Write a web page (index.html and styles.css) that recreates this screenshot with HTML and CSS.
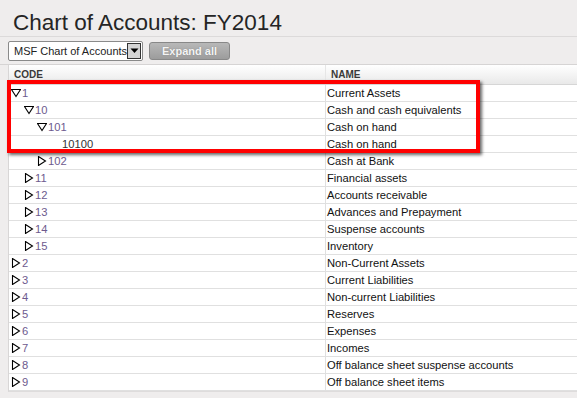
FILE: index.html
```html
<!DOCTYPE html>
<html>
<head>
<meta charset="utf-8">
<link rel="stylesheet" href="styles.css">
</head>
<body>
<div class="page">
  <h1 class="title">Chart of Accounts: FY2014</h1>
  <div class="toolbar">
    <div class="select"><span class="select-text">MSF Chart of Accounts</span><span class="select-arrow"><svg width="11" height="11" viewBox="0 0 11 11"><path d="M1.5 3.5 H9.5 L5.5 8 Z" fill="#000"/></svg></span></div>
    <button class="btn">Expand all</button>
  </div>
  <div class="grid">
    <div class="head"><div class="hc code">CODE</div><div class="hc name">NAME</div></div>
    <div class="row"><div class="c code l0"><svg class="tri" viewBox="0 0 10 10"><path d="M0.5 1.5 H9.5 L5 8.5 Z"/></svg><span class="lnk">1</span></div><div class="c name">Current Assets</div></div>
    <div class="row"><div class="c code l1"><svg class="tri" viewBox="0 0 10 10"><path d="M0.5 1.5 H9.5 L5 8.5 Z"/></svg><span class="lnk">10</span></div><div class="c name">Cash and cash equivalents</div></div>
    <div class="row"><div class="c code l2"><svg class="tri" viewBox="0 0 10 10"><path d="M0.5 1.5 H9.5 L5 8.5 Z"/></svg><span class="lnk">101</span></div><div class="c name">Cash on hand</div></div>
    <div class="row"><div class="c code l3"><span class="leaf">10100</span></div><div class="c name">Cash on hand</div></div>
    <div class="row"><div class="c code l2"><svg class="tri" viewBox="0 0 10 10"><path d="M1.5 0.5 V9.5 L8.5 5 Z"/></svg><span class="lnk">102</span></div><div class="c name">Cash at Bank</div></div>
    <div class="row"><div class="c code l1"><svg class="tri" viewBox="0 0 10 10"><path d="M1.5 0.5 V9.5 L8.5 5 Z"/></svg><span class="lnk">11</span></div><div class="c name">Financial assets</div></div>
    <div class="row"><div class="c code l1"><svg class="tri" viewBox="0 0 10 10"><path d="M1.5 0.5 V9.5 L8.5 5 Z"/></svg><span class="lnk">12</span></div><div class="c name">Accounts receivable</div></div>
    <div class="row"><div class="c code l1"><svg class="tri" viewBox="0 0 10 10"><path d="M1.5 0.5 V9.5 L8.5 5 Z"/></svg><span class="lnk">13</span></div><div class="c name">Advances and Prepayment</div></div>
    <div class="row"><div class="c code l1"><svg class="tri" viewBox="0 0 10 10"><path d="M1.5 0.5 V9.5 L8.5 5 Z"/></svg><span class="lnk">14</span></div><div class="c name">Suspense accounts</div></div>
    <div class="row"><div class="c code l1"><svg class="tri" viewBox="0 0 10 10"><path d="M1.5 0.5 V9.5 L8.5 5 Z"/></svg><span class="lnk">15</span></div><div class="c name">Inventory</div></div>
    <div class="row"><div class="c code l0"><svg class="tri" viewBox="0 0 10 10"><path d="M1.5 0.5 V9.5 L8.5 5 Z"/></svg><span class="lnk">2</span></div><div class="c name">Non-Current Assets</div></div>
    <div class="row"><div class="c code l0"><svg class="tri" viewBox="0 0 10 10"><path d="M1.5 0.5 V9.5 L8.5 5 Z"/></svg><span class="lnk">3</span></div><div class="c name">Current Liabilities</div></div>
    <div class="row"><div class="c code l0"><svg class="tri" viewBox="0 0 10 10"><path d="M1.5 0.5 V9.5 L8.5 5 Z"/></svg><span class="lnk">4</span></div><div class="c name">Non-current Liabilities</div></div>
    <div class="row"><div class="c code l0"><svg class="tri" viewBox="0 0 10 10"><path d="M1.5 0.5 V9.5 L8.5 5 Z"/></svg><span class="lnk">5</span></div><div class="c name">Reserves</div></div>
    <div class="row"><div class="c code l0"><svg class="tri" viewBox="0 0 10 10"><path d="M1.5 0.5 V9.5 L8.5 5 Z"/></svg><span class="lnk">6</span></div><div class="c name">Expenses</div></div>
    <div class="row"><div class="c code l0"><svg class="tri" viewBox="0 0 10 10"><path d="M1.5 0.5 V9.5 L8.5 5 Z"/></svg><span class="lnk">7</span></div><div class="c name">Incomes</div></div>
    <div class="row"><div class="c code l0"><svg class="tri" viewBox="0 0 10 10"><path d="M1.5 0.5 V9.5 L8.5 5 Z"/></svg><span class="lnk">8</span></div><div class="c name">Off balance sheet suspense accounts</div></div>
    <div class="row"><div class="c code l0"><svg class="tri" viewBox="0 0 10 10"><path d="M1.5 0.5 V9.5 L8.5 5 Z"/></svg><span class="lnk">9</span></div><div class="c name">Off balance sheet items</div></div>
    <div class="highlight"></div>
  </div>
</div>
</body>
</html>
```

FILE: styles.css
```css
html, body {
  margin: 0;
  padding: 0;
  background: #efeded;
  font-family: "Liberation Sans", Arial, sans-serif;
}
.page {
  width: 577px;
  height: 398px;
  overflow: hidden;
}
.title {
  margin: 0;
  padding: 11px 0 0 13px;
  height: 25px;
  font-size: 22.5px;
  font-weight: normal;
  color: #252525;
  line-height: 24px;
  border-bottom: 1px solid #dcdada;
}
.toolbar {
  display: flex;
  align-items: center;
  gap: 6px;
  height: 27px;
  padding-left: 8px;
  border-bottom: 1px solid #d6d4d4;
}
.select {
  width: 135px;
  height: 20px;
  box-sizing: border-box;
  border: 1px solid #8a8a8a;
  border-radius: 2px;
  background: #fff;
  display: flex;
  align-items: center;
  font-size: 11px;
  color: #222;
  padding-left: 5px;
  justify-content: space-between;
}
.select-text { white-space: nowrap; overflow: hidden; }
.select-arrow {
  width: 14px;
  height: 16px;
  box-sizing: border-box;
  border: 1px solid #333;
  background: #d4d4d4;
  display: flex;
  align-items: center;
  justify-content: center;
  margin-right: 1px;
}
.btn {
  width: 81px;
  height: 18px;
  border: 1px solid #888;
  border-radius: 3px;
  background: linear-gradient(#b8b8b8, #9c9c9c);
  color: #f4f4f4;
  font-family: "Liberation Sans", Arial, sans-serif;
  font-size: 11px;
  font-weight: bold;
  padding: 0;
  text-shadow: 0 0 1px #777;
}
.grid {
  position: relative;
  margin-left: 8px;
  border-left: 1px solid #d8d6d6;
  border-bottom: 1px solid #dedcdc;
  background: #fff;
}
.head {
  display: flex;
  height: 19px;
  background: linear-gradient(#ffffff, #e9e9e9);
  border-bottom: 1px solid #d6d6d6;
}
.hc {
  font-size: 10px;
  font-weight: bold;
  color: #3a3a3a;
  line-height: 19px;
}
.hc.code { width: 317px; box-sizing: border-box; padding-left: 5px; border-right: 1px solid #e6e6e6; }
.hc.name { padding-left: 5px; }
.row {
  display: flex;
  height: 16px;
  border-bottom: 1px solid #e0e0e0;
  font-size: 11.2px;
  line-height: 16px;
}
.c.code {
  width: 317px;
  box-sizing: border-box;
  display: flex;
  align-items: center;
  border-right: 1px solid #e0e0e0;
}
.c.name { padding-left: 1px; color: #111; white-space: nowrap; }
.l0 { padding-left: 2px; }
.l1 { padding-left: 15px; }
.l2 { padding-left: 28px; }
.l3 { padding-left: 53px; }
.tri {
  width: 10px;
  height: 10px;
  fill: #fff;
  stroke: #000;
  stroke-width: 1.1;
  margin-right: 1px;
  flex: none;
}
.lnk { color: #6d5a8e; }
.leaf { color: #333; }
.highlight {
  position: absolute;
  left: -2px;
  top: 15px;
  width: 473px;
  height: 73px;
  box-sizing: border-box;
  border: 4px solid #ff0000;
  box-shadow: 2px 2px 3px rgba(0,0,0,0.6);
  pointer-events: none;
}
```
